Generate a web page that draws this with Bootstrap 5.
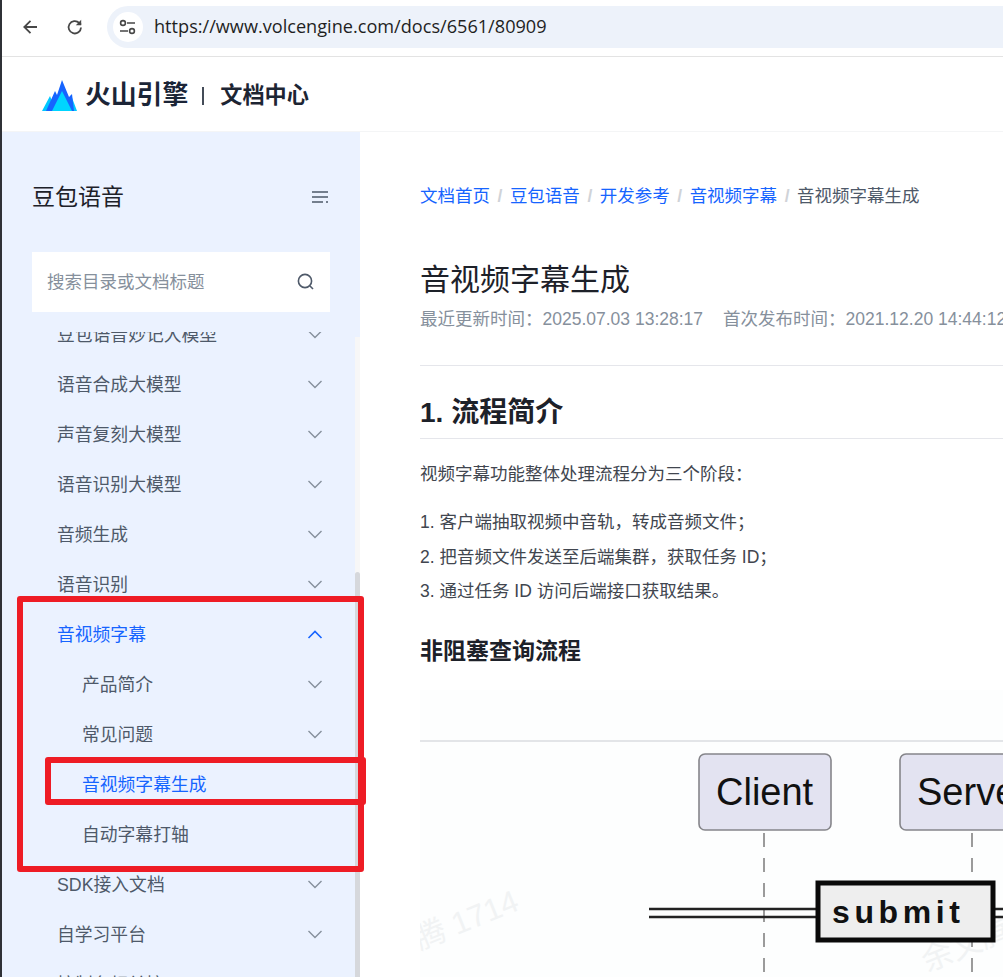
<!doctype html>
<html lang="zh-CN">
<head>
<meta charset="utf-8">
<title>音视频字幕生成</title>
<link href="https://cdn.jsdelivr.net/npm/bootstrap@5.3.0/dist/css/bootstrap.min.css" rel="stylesheet">
<style>
html,body{height:977px;overflow:hidden}
body{font-family:"Liberation Sans","Noto Sans CJK SC",sans-serif;color:#1d2129;background:#fff;position:relative}
.edge-strip{width:2px;flex:none;background:#2f3136}
.page-col{width:1001px;height:977px;overflow:hidden}
.chrome-bar{height:57px;border-bottom:1px solid #e3e3e3;padding:6px 0 8px 19px;flex:none}
.chrome-icon{width:20px;height:20px;flex:none;color:#474747}
.omni{height:42px;margin-left:22px;flex:1;background:#edf2fa;border-radius:21px 0 0 21px;padding-left:6px;font-family:"Open Sans",sans-serif;font-size:18.14px;color:#1f1f1f;white-space:nowrap}
.omni-badge{width:30px;height:30px;border-radius:50%;background:#fff;flex:none;margin-right:11px}
.brand-bar{height:75px;padding:4px 0 0 40px;flex:none;border-bottom:1px solid #f4f5f6}
.brand-name{font-size:25.8px;font-weight:700;color:#1b2537;margin-left:7px;line-height:1}
.brand-sep{width:2px;height:18px;background:#444c58;margin:0 16px 0 14px}
.brand-sub{font-size:22.2px;font-weight:700;color:#1d2533;line-height:1}
.side{width:358px;flex:none;background:#ebf2ff;position:relative;overflow:hidden}
.side-head{height:120px;padding:10px 31px 0 30px;flex:none}
.side-title{font-size:23px;color:#1d2129;line-height:1}
.side-search{width:298px;height:60px;margin-left:30px;background:#fff;padding:0 15px;font-size:17.5px;color:#86909c;border:0;border-radius:0;flex:none}
.side-search-text{line-height:60px}
.tree{margin-top:20px;overflow:hidden;flex:1}
.tree-inner{margin-top:-22px}
.tree-row{height:50px;padding:0 37px 0 55px;font-size:17.8px;color:#4e5969;white-space:nowrap}
.tree-row.sub{padding-left:80px}
.tree-row.on{color:#1664ff}
.tree-chev{width:16px;height:16px;color:#86909c;flex:none}
.tree-row.on .tree-chev{color:#1664ff}
.side-track{position:absolute;right:0;top:205px;bottom:0;width:5px;background:#f7f7f7}
.side-thumb{position:absolute;right:0;top:440px;bottom:0;width:5px;background:#d6d8dc;border-radius:3px 3px 0 0}
.doc{flex:1;padding-left:60px;min-width:0;overflow:hidden}
.crumbs{margin:53px 0 0;font-size:17.5px;line-height:22px;--bs-breadcrumb-divider-color:#d0d3d8;--bs-breadcrumb-item-padding-x:7.5px;--bs-breadcrumb-margin-bottom:0;flex-wrap:nowrap;white-space:nowrap}
.crumbs a{color:#1664ff;text-decoration:none}
.crumbs .breadcrumb-item.active{color:#4e5969}
.crumbs .breadcrumb-item+.breadcrumb-item::before{font-weight:700}
.doc-title{font-size:30px;font-weight:400;line-height:40px;margin:53px 0 0;color:#1d2129}
.doc-meta{font-size:17.5px;line-height:24px;margin-top:7px;color:#86909c;white-space:nowrap;padding-bottom:34px;border-bottom:1px solid #e5e6eb}
.doc-meta span+span{margin-left:20px}
.doc-h2{font-size:28px;font-weight:700;line-height:36px;margin:29px 0 0;padding-bottom:7px;border-bottom:1px solid #e5e6eb;color:#1d2129}
.doc-p{font-size:17.5px;line-height:24px;color:#41464f;margin:23px 0 0;white-space:nowrap}
.doc-list{margin:19px 0 0;padding:0;list-style:none;font-size:17.5px;line-height:34.5px;color:#41464f;white-space:nowrap}
.doc-h3{font-size:23px;font-weight:700;line-height:30px;margin:27px 0 0;color:#1d2129}
.diagram{display:block;width:583px;height:322px;margin-top:24px;flex:none}
.mark-box{position:absolute;border:6px solid #ee1c25;border-radius:3px;pointer-events:none}
.mark-a{left:17px;top:596px;width:347px;height:276px}
.mark-b{left:45px;top:757px;width:321px;height:48px}
</style>
</head>
<body>
<div class="d-flex">
  <div class="edge-strip"></div>
  <div class="page-col d-flex flex-column">
    <div class="chrome-bar d-flex align-items-center">
      <svg class="chrome-icon" viewBox="0 0 20 20" fill="none" stroke="currentColor" stroke-width="1.8"><path d="M16 10H3.5M9.5 3.8 3.3 10l6.2 6.2"/></svg>
      <svg class="chrome-icon ms-4" viewBox="0 0 20 20" fill="none" stroke="currentColor" stroke-width="1.8"><path d="M16 10.5a6.2 6.2 0 1 1-1.8-4.6L16 7.6"/><path d="M16.2 2.8v5.4h-5.4" fill="currentColor" stroke="none"/></svg>
      <div class="omni d-flex align-items-center">
        <div class="omni-badge d-flex align-items-center justify-content-center">
          <svg width="18" height="16" viewBox="0 0 18 16" fill="none" stroke="#474747" stroke-width="1.6"><circle cx="4" cy="4" r="2.4"/><path d="M8 4h8M1 12h8"/><circle cx="13" cy="12" r="2.4"/></svg>
        </div>
        <span>https://www.volcengine.com/docs/6561/80909</span>
      </div>
    </div>
    <div class="brand-bar d-flex align-items-center">
      <svg width="36" height="32" viewBox="0 0 36 32"><path fill="#00c8ff" d="M0 31 8 16l6 15zM22 31l7-16 6 16z"/><path fill="#1664ff" d="M4 31 13 11l2 4 5-15 7 17 3-3 2 17z"/><path fill="#00d5ff" d="M10 31 20 11l10 20z"/></svg>
      <span class="brand-name">火山引擎</span>
      <span class="brand-sep"></span>
      <span class="brand-sub">文档中心</span>
    </div>
    <div class="d-flex flex-grow-1" style="min-height:0">
      <aside class="side d-flex flex-column">
        <div class="side-head d-flex align-items-center justify-content-between">
          <span class="side-title">豆包语音</span>
          <svg width="17" height="14" viewBox="0 0 17 14" fill="none" stroke="#4e5969" stroke-width="1.7"><path d="M0 2h16M0 7h16M0 12h11M14 12h2"/></svg>
        </div>
        <div class="side-search d-flex align-items-center justify-content-between">
          <span class="side-search-text">搜索目录或文档标题</span>
          <svg width="18" height="18" viewBox="0 0 18 18" fill="none" stroke="#4e5969" stroke-width="1.6"><circle cx="8" cy="8" r="6.6"/><path d="m13 13 3 3"/></svg>
        </div>
        <div class="tree">
          <div class="tree-inner">
            <div class="tree-row d-flex align-items-center justify-content-between"><span>豆包语音妙记大模型</span><svg class="tree-chev" viewBox="0 0 16 16" fill="none" stroke="currentColor" stroke-width="1.4"><path d="m1.5 4 6.5 6.5L14.5 4"/></svg></div>
            <div class="tree-row d-flex align-items-center justify-content-between"><span>语音合成大模型</span><svg class="tree-chev" viewBox="0 0 16 16" fill="none" stroke="currentColor" stroke-width="1.4"><path d="m1.5 4 6.5 6.5L14.5 4"/></svg></div>
            <div class="tree-row d-flex align-items-center justify-content-between"><span>声音复刻大模型</span><svg class="tree-chev" viewBox="0 0 16 16" fill="none" stroke="currentColor" stroke-width="1.4"><path d="m1.5 4 6.5 6.5L14.5 4"/></svg></div>
            <div class="tree-row d-flex align-items-center justify-content-between"><span>语音识别大模型</span><svg class="tree-chev" viewBox="0 0 16 16" fill="none" stroke="currentColor" stroke-width="1.4"><path d="m1.5 4 6.5 6.5L14.5 4"/></svg></div>
            <div class="tree-row d-flex align-items-center justify-content-between"><span>音频生成</span><svg class="tree-chev" viewBox="0 0 16 16" fill="none" stroke="currentColor" stroke-width="1.4"><path d="m1.5 4 6.5 6.5L14.5 4"/></svg></div>
            <div class="tree-row d-flex align-items-center justify-content-between"><span>语音识别</span><svg class="tree-chev" viewBox="0 0 16 16" fill="none" stroke="currentColor" stroke-width="1.4"><path d="m1.5 4 6.5 6.5L14.5 4"/></svg></div>
            <div class="tree-row on d-flex align-items-center justify-content-between"><span>音视频字幕</span><svg class="tree-chev" viewBox="0 0 16 16" fill="none" stroke="currentColor" stroke-width="1.6"><path d="m1.5 11 6.5-6.5 6.5 6.5"/></svg></div>
            <div class="tree-row sub d-flex align-items-center justify-content-between"><span>产品简介</span><svg class="tree-chev" viewBox="0 0 16 16" fill="none" stroke="currentColor" stroke-width="1.4"><path d="m1.5 4 6.5 6.5L14.5 4"/></svg></div>
            <div class="tree-row sub d-flex align-items-center justify-content-between"><span>常见问题</span><svg class="tree-chev" viewBox="0 0 16 16" fill="none" stroke="currentColor" stroke-width="1.4"><path d="m1.5 4 6.5 6.5L14.5 4"/></svg></div>
            <div class="tree-row sub on d-flex align-items-center"><span>音视频字幕生成</span></div>
            <div class="tree-row sub d-flex align-items-center"><span>自动字幕打轴</span></div>
            <div class="tree-row d-flex align-items-center justify-content-between"><span>SDK接入文档</span><svg class="tree-chev" viewBox="0 0 16 16" fill="none" stroke="currentColor" stroke-width="1.4"><path d="m1.5 4 6.5 6.5L14.5 4"/></svg></div>
            <div class="tree-row d-flex align-items-center justify-content-between"><span>自学习平台</span><svg class="tree-chev" viewBox="0 0 16 16" fill="none" stroke="currentColor" stroke-width="1.4"><path d="m1.5 4 6.5 6.5L14.5 4"/></svg></div>
            <div class="tree-row d-flex align-items-center justify-content-between"><span>控制台相关接口</span><svg class="tree-chev" viewBox="0 0 16 16" fill="none" stroke="currentColor" stroke-width="1.4"><path d="m1.5 4 6.5 6.5L14.5 4"/></svg></div>
          </div>
        </div>
        <div class="side-track"></div>
        <div class="side-thumb"></div>
      </aside>
      <main class="doc d-flex flex-column">
        <nav aria-label="breadcrumb">
          <ol class="breadcrumb crumbs">
            <li class="breadcrumb-item"><a href="#">文档首页</a></li>
            <li class="breadcrumb-item"><a href="#">豆包语音</a></li>
            <li class="breadcrumb-item"><a href="#">开发参考</a></li>
            <li class="breadcrumb-item"><a href="#">音视频字幕</a></li>
            <li class="breadcrumb-item active" aria-current="page">音视频字幕生成</li>
          </ol>
        </nav>
        <h1 class="doc-title">音视频字幕生成</h1>
        <div class="doc-meta"><span>最近更新时间：2025.07.03 13:28:17</span><span>首次发布时间：2021.12.20 14:44:12</span></div>
        <h2 class="doc-h2">1. 流程简介</h2>
        <p class="doc-p">视频字幕功能整体处理流程分为三个阶段：</p>
        <ol class="doc-list">
          <li>1. 客户端抽取视频中音轨，转成音频文件；</li>
          <li>2. 把音频文件发送至后端集群，获取任务 ID；</li>
          <li>3. 通过任务 ID 访问后端接口获取结果。</li>
        </ol>
        <h3 class="doc-h3">非阻塞查询流程</h3>
        <svg class="diagram" viewBox="420 690 583 322" xmlns="http://www.w3.org/2000/svg">
          <rect x="420" y="690" width="583" height="322" fill="#fdfefe"/>
          <g fill="#f1f3f4" font-family="Liberation Sans,Noto Sans CJK SC" font-size="31">
            <text transform="translate(420 950) rotate(-22)">腾 1714</text>
            <text transform="translate(927 972) rotate(-22)">余文腾</text>
          </g>
          <path d="M420 741H1003" stroke="#e3e5e8" stroke-width="2"/>
          <path d="M764 833V977M972 833V977" stroke="#8a8a8a" stroke-width="1.7" stroke-dasharray="14 11" fill="none"/>
          <rect x="699" y="754" width="132" height="76" rx="6" fill="#e3e3f1" stroke="#85858a" stroke-width="1.6"/>
          <rect x="900" y="754" width="132" height="76" rx="6" fill="#e3e3f1" stroke="#85858a" stroke-width="1.6"/>
          <text x="716" y="805" font-family="Liberation Sans" font-size="38" fill="#111">Client</text>
          <text x="917" y="805" font-family="Liberation Sans" font-size="38" fill="#111">Server</text>
          <path d="M649 909H816M649 917H816M995 909H1003M995 917H1003" stroke="#222" stroke-width="2.6"/>
          <rect x="818" y="883" width="175" height="57" fill="#eeeeee" stroke="#0a0a0a" stroke-width="5"/>
          <text x="832" y="923" font-family="Liberation Sans" font-size="32" font-weight="700" letter-spacing="4.6" fill="#111">submit</text>
        </svg>
      </main>
    </div>
  </div>
</div>
<div class="mark-box mark-a"></div>
<div class="mark-box mark-b"></div>
<script src="https://cdn.jsdelivr.net/npm/bootstrap@5.3.0/dist/js/bootstrap.bundle.min.js"></script>
</body>
</html>
